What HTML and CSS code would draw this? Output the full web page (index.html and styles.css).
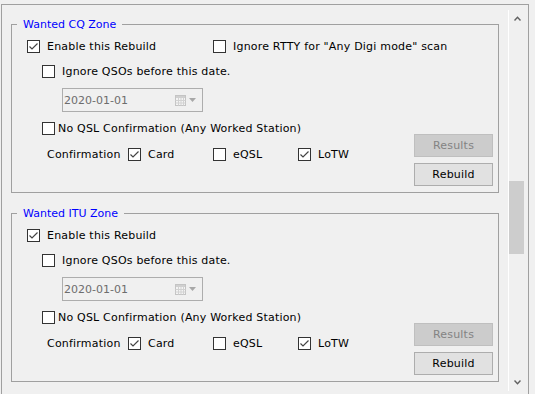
FILE: index.html
```html
<!DOCTYPE html>
<html>
<head>
<meta charset="utf-8">
<link rel="stylesheet" href="styles.css">
</head>
<body>
<div class="frame">
  <div class="content">
    <fieldset class="grp">
      <legend>Wanted CQ Zone</legend>
      <div class="grp-body">
        <div class="opts">
          <div class="row r1">
            <label class="cb first"><span class="box"><svg width="11" height="11" viewBox="0 0 11 11"><polyline points="1.5,5.5 4,8 9.5,2.5" fill="none" stroke="#444" stroke-width="1.2"/></svg></span>Enable this Rebuild</label>
            <label class="cb"><span class="box"></span>Ignore RTTY for "Any Digi mode" scan</label>
          </div>
          <div class="row r2"><label class="cb"><span class="box"></span>Ignore QSOs before this date.</label></div>
          <div class="date">
            <span class="date-val">2020-01-01</span>
            <svg class="cal" width="11" height="11" viewBox="0 0 11 11"><rect x="0.5" y="0.5" width="10" height="10" fill="#f4f4f4" stroke="#c4c4c4"/><rect x="1" y="1" width="9" height="2" fill="#d0d0d0"/><path d="M0.5 5.5H10.5M0.5 8H10.5M3.5 3V10.5M6 3V10.5M8.5 3V10.5" stroke="#d2d2d2" stroke-width="1"/></svg>
            <svg class="tri" width="7" height="4" viewBox="0 0 7 4"><polygon points="0,0 7,0 3.5,4" fill="#a8a8a8"/></svg>
          </div>
          <div class="row r3"><label class="cb tight"><span class="box"></span>No QSL Confirmation (Any Worked Station)</label></div>
          <div class="row r4">
            <span class="conf-label">Confirmation</span>
            <label class="cb w85"><span class="box"><svg width="11" height="11" viewBox="0 0 11 11"><polyline points="1.5,5.5 4,8 9.5,2.5" fill="none" stroke="#444" stroke-width="1.2"/></svg></span>Card</label>
            <label class="cb w85"><span class="box"></span>eQSL</label>
            <label class="cb"><span class="box"><svg width="11" height="11" viewBox="0 0 11 11"><polyline points="1.5,5.5 4,8 9.5,2.5" fill="none" stroke="#444" stroke-width="1.2"/></svg></span>LoTW</label>
          </div>
        </div>
        <div class="btns">
          <button class="btn dis" disabled>Results</button>
          <button class="btn">Rebuild</button>
        </div>
      </div>
    </fieldset>

    <fieldset class="grp second">
      <legend>Wanted ITU Zone</legend>
      <div class="grp-body">
        <div class="opts">
          <div class="row r1">
            <label class="cb first"><span class="box"><svg width="11" height="11" viewBox="0 0 11 11"><polyline points="1.5,5.5 4,8 9.5,2.5" fill="none" stroke="#444" stroke-width="1.2"/></svg></span>Enable this Rebuild</label>
          </div>
          <div class="row r2"><label class="cb"><span class="box"></span>Ignore QSOs before this date.</label></div>
          <div class="date">
            <span class="date-val">2020-01-01</span>
            <svg class="cal" width="11" height="11" viewBox="0 0 11 11"><rect x="0.5" y="0.5" width="10" height="10" fill="#f4f4f4" stroke="#c4c4c4"/><rect x="1" y="1" width="9" height="2" fill="#d0d0d0"/><path d="M0.5 5.5H10.5M0.5 8H10.5M3.5 3V10.5M6 3V10.5M8.5 3V10.5" stroke="#d2d2d2" stroke-width="1"/></svg>
            <svg class="tri" width="7" height="4" viewBox="0 0 7 4"><polygon points="0,0 7,0 3.5,4" fill="#a8a8a8"/></svg>
          </div>
          <div class="row r3"><label class="cb tight"><span class="box"></span>No QSL Confirmation (Any Worked Station)</label></div>
          <div class="row r4">
            <span class="conf-label">Confirmation</span>
            <label class="cb w85"><span class="box"><svg width="11" height="11" viewBox="0 0 11 11"><polyline points="1.5,5.5 4,8 9.5,2.5" fill="none" stroke="#444" stroke-width="1.2"/></svg></span>Card</label>
            <label class="cb w85"><span class="box"></span>eQSL</label>
            <label class="cb"><span class="box"><svg width="11" height="11" viewBox="0 0 11 11"><polyline points="1.5,5.5 4,8 9.5,2.5" fill="none" stroke="#444" stroke-width="1.2"/></svg></span>LoTW</label>
          </div>
        </div>
        <div class="btns">
          <button class="btn dis" disabled>Results</button>
          <button class="btn">Rebuild</button>
        </div>
      </div>
    </fieldset>
  </div>

  <div class="sb">
    <div class="sb-btn"><svg width="7" height="5" viewBox="0 0 7 5"><polyline points="0.5,4.5 3.5,1.2 6.5,4.5" fill="none" stroke="#606060" stroke-width="1.4"/></svg></div>
    <div class="sb-track"><div class="thumb"></div></div>
    <div class="sb-btn"><svg width="7" height="5" viewBox="0 0 7 5"><polyline points="0.5,0.5 3.5,3.8 6.5,0.5" fill="none" stroke="#606060" stroke-width="1.4"/></svg></div>
  </div>
</div>
</body>
</html>
```

FILE: styles.css
```css
html, body {
  margin: 0;
  padding: 0;
}
body {
  background: #f0f0f0;
  font-family: "DejaVu Sans", Tahoma, sans-serif;
  font-size: 11px;
  letter-spacing: 0.2px;
  color: #000;
  overflow: hidden;
}
.frame {
  margin: 4px 0 0 1px;
  width: 528px;
  height: 400px;
  box-sizing: border-box;
  border: 1px solid #a0a0a0;
  border-bottom: none;
  display: flex;
}
.content {
  flex: 1;
  padding: 0 9px;
  min-width: 0;
}
.grp {
  margin: 12px 0 0 0;
  padding: 0 5px 6px 0;
  border: 1px solid #a0a0a0;
  min-width: 0;
}
.grp.second {
  margin-top: 13px;
}
.grp legend {
  margin-left: 5px;
  padding: 0 6px;
  line-height: 15px;
  color: #0000ff;
  letter-spacing: 0;
}
.grp-body {
  display: grid;
  grid-template-columns: minmax(0, 1fr) 79px;
}
.opts {
  padding-bottom: 25px;
  min-width: 0;
}
.row {
  display: flex;
  align-items: center;
  height: 13px;
  white-space: nowrap;
}
.cb {
  display: flex;
  align-items: center;
  height: 13px;
}
.box {
  width: 13px;
  height: 13px;
  box-sizing: border-box;
  border: 1px solid #333;
  background: #fff;
  margin-right: 7px;
  flex: none;
  display: flex;
}
.box svg {
  display: block;
}
.tight .box {
  margin-right: 3px;
}
.r1 {
  margin-top: 8px;
  padding-left: 15px;
}
.r1 .first {
  width: 186px;
  flex: none;
}
.r2 {
  margin-top: 12px;
  padding-left: 30px;
}
.r3 {
  margin-top: 10px;
  padding-left: 30px;
}
.r4 {
  margin-top: 13px;
  padding-left: 35px;
}
.conf-label {
  width: 81px;
  flex: none;
}
.w85 {
  width: 85px;
  flex: none;
}
.date {
  margin: 10px 0 0 50px;
  width: 141px;
  height: 24px;
  box-sizing: border-box;
  border: 1px solid #adadad;
  display: flex;
  align-items: center;
  padding: 0 6px 0 1px;
  color: #6d6d6d;
  letter-spacing: 0;
}
.date-val {
  flex: 1;
}
.cal {
  display: block;
  margin-right: 3px;
}
.tri {
  display: block;
}
.btns {
  align-self: end;
  display: flex;
  flex-direction: column;
  gap: 6px;
}
.btn {
  width: 79px;
  height: 23px;
  box-sizing: border-box;
  border: 1px solid #adadad;
  background: #e1e1e1;
  font: inherit;
  letter-spacing: 0.2px;
  color: #000;
  padding: 0;
  margin: 0;
}
.btn.dis {
  background: #cccccc;
  border-color: #bfbfbf;
  color: #838383;
}
.sb {
  width: 16px;
  height: 381px;
  margin: 5px 3px 0 0;
  border-left: 1px solid #fff;
  display: flex;
  flex-direction: column;
  flex: none;
}
.sb-btn {
  height: 17px;
  display: flex;
  align-items: center;
  justify-content: center;
  flex: none;
}
.sb-btn svg {
  display: block;
}
.sb-track {
  flex: 1;
  padding-top: 154px;
}
.thumb {
  width: 15px;
  height: 73px;
  background: #cdcdcd;
}
```
